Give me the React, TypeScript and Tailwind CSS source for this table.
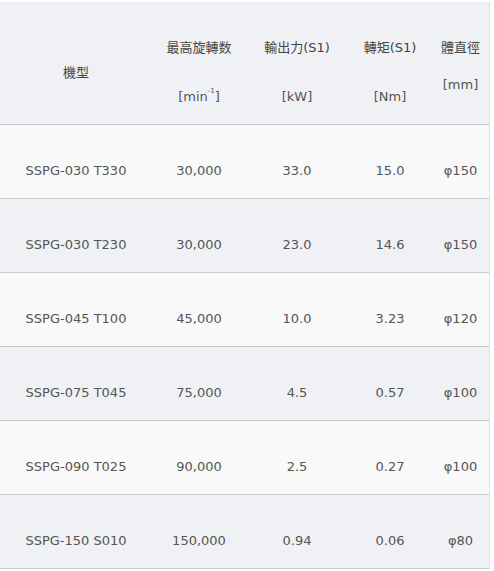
const font = { fontFamily: '"DejaVu Sans", "Noto Sans CJK TC", sans-serif' }

const rows = [
  ["SSPG-030 T330", "30,000", "33.0", "15.0", "φ150"],
  ["SSPG-030 T230", "30,000", "23.0", "14.6", "φ150"],
  ["SSPG-045 T100", "45,000", "10.0", "3.23", "φ120"],
  ["SSPG-075 T045", "75,000", "4.5", "0.57", "φ100"],
  ["SSPG-090 T025", "90,000", "2.5", "0.27", "φ100"],
  ["SSPG-150 S010", "150,000", "0.94", "0.06", "φ80"],
]

const cols = "grid grid-cols-[152px_94px_102px_84px_57px]"

export default function App() {
  return (
    <div className="min-h-screen bg-white pt-[2px]" style={font}>
      <div className="w-[490px] border-r border-[#e2e3e6] text-[13px] leading-[18px] text-[#555]">
        {/* Header */}
        <div className={`${cols} h-[123px] bg-[#f0f1f4] border-b border-[#c9cacd] text-[#444]`}>
          <div className="flex justify-center pt-[62px]">機型</div>
          <div className="flex flex-col items-center pt-[37px]">
            <span>最高旋轉数</span>
            <span className="mt-[31px] text-[#555]">
              [min<sup className="text-[7px] align-[5px]">-1</sup>]
            </span>
          </div>
          <div className="flex flex-col items-center pt-[37px]">
            <span>輸出力(S1)</span>
            <span className="mt-[31px] text-[#555]">[kW]</span>
          </div>
          <div className="flex flex-col items-center pt-[37px]">
            <span>轉矩(S1)</span>
            <span className="mt-[31px] text-[#555]">[Nm]</span>
          </div>
          <div className="flex flex-col items-center pt-[37px]">
            <span>體直徑</span>
            <span className="mt-[19px] text-[#555]">[mm]</span>
          </div>
        </div>

        {/* Rows */}
        {rows.map((r, i) => (
          <div
            key={i}
            className={`${cols} h-[74px] border-b border-[#c9cacd] ${i % 2 === 0 ? "bg-[#f9f9f9]" : "bg-[#f0f1f4]"}`}
          >
            {r.map((c, j) => (
              <div key={j} className="flex justify-center pt-[37px]">
                {c}
              </div>
            ))}
          </div>
        ))}
      </div>
    </div>
  )
}
